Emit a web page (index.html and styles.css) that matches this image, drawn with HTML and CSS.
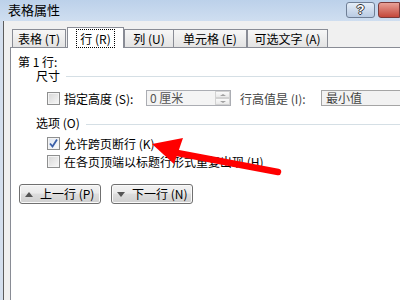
FILE: index.html
```html
<!DOCTYPE html>
<html lang="zh">
<head>
<meta charset="utf-8">
<link rel="stylesheet" href="styles.css">
</head>
<body>
<div class="window">
  <div class="titlebar">
    <span class="title">表格属性</span>
    <span class="tb-btns">
      <span class="help">?</span>
      <span class="close"></span>
    </span>
  </div>
  <div class="body">
    <div class="lframe"></div>
    <div class="dlg">
      <div class="tabs">
        <div class="tab t1">表格 (T)</div>
        <div class="tab sel"><span class="focus">行 (R)</span></div>
        <div class="tab t3">列 (U)</div>
        <div class="tab t4">单元格 (E)</div>
        <div class="tab t5">可选文字 (A)</div>
      </div>
      <div class="panel">
        <div class="rowtitle">第&nbsp;1&nbsp;行:</div>
        <div class="group g1"><span>尺寸</span><span class="rule"></span></div>
        <div class="sizerow">
          <span class="cb"></span>
          <span class="lbl1">指定高度 (S):</span>
          <span class="spin"><span class="spin-val">0&nbsp;厘米</span><span class="spin-btns"><span class="sb"><span class="mini up"></span></span><span class="sb"><span class="mini dn"></span></span></span></span>
          <span class="lbl2">行高值是 (I):</span>
          <span class="select">最小值</span>
        </div>
        <div class="group g2"><span>选项 (O)</span><span class="rule"></span></div>
        <div class="cbrow first">
          <span class="cb checked"><svg viewBox="0 0 11 11" width="11" height="11"><path d="M2 5.5 L4.5 8.5 L9 1.5" fill="none" stroke="#3a5fa8" stroke-width="1.8"/></svg></span>
          <span>允许跨页断行 (K)</span>
        </div>
        <div class="cbrow">
          <span class="cb"></span>
          <span>在各页顶端以标题行形式重复出现 (H)</span>
        </div>
        <div class="btnrow">
          <span class="btn"><span class="tri up"></span>上一行 (P)</span>
          <span class="btn"><span class="tri dn"></span>下一行 (N)</span>
        </div>
      </div>
    </div>
  </div>
</div>
<svg class="arrow" width="400" height="300" viewBox="0 0 400 300">
  <polygon points="152,144 183,138 174,164" fill="#ff0000"/>
  <line x1="172" y1="152" x2="278" y2="172" stroke="#ff0000" stroke-width="6.5" stroke-linecap="round"/>
</svg>
</body>
</html>
```
FILE: styles.css
```css
html, body {
  margin: 0;
  padding: 0;
}
body {
  width: 400px;
  height: 300px;
  overflow: hidden;
  position: relative;
  font-family: "Noto Sans CJK SC", "Liberation Sans", sans-serif;
  font-size: 12px;
  color: #000;
  background: #fff;
}
.window {
  width: 400px;
  height: 300px;
  display: flex;
  flex-direction: column;
}
.titlebar {
  height: 21px;
  flex: none;
  display: flex;
  align-items: flex-start;
  justify-content: space-between;
  background: linear-gradient(#bcd1ea, #cfdef0);
}
.title {
  font-size: 13px;
  line-height: 19px;
  padding-left: 8px;
  color: #000;
}
.tb-btns {
  display: flex;
  gap: 3px;
  margin-top: 2px;
}
.help {
  width: 27px;
  height: 14px;
  border: 1px solid #6f7f96;
  border-radius: 3px;
  background: linear-gradient(#e4edf8, #b9cbe3);
  color: #fff;
  font-family: "Liberation Sans", sans-serif;
  font-weight: bold;
  font-size: 13px;
  line-height: 14px;
  text-align: center;
  text-shadow: 1px 0 0 #333, -1px 0 0 #333, 0 1px 0 #333, 0 -1px 0 #333;
}
.close {
  width: 20px;
  height: 14px;
  border: 1px solid #7a3a3a;
  border-radius: 3px 0 0 3px;
  background: linear-gradient(#e8a197, #c4473a);
}
.body {
  flex: 1;
  display: flex;
}
.lframe {
  width: 3px;
  flex: none;
  background: #d4dfee;
  border-right: 1px solid #5c5c5c;
}
.dlg {
  flex: 1;
  background: #f0f0f0;
  padding-left: 6px;
  padding-top: 6px;
  display: flex;
  flex-direction: column;
}
.tabs {
  display: flex;
  align-items: flex-end;
  height: 20px;
  padding-left: 2px;
  position: relative;
  z-index: 1;
}
.tab {
  height: 17px;
  border: 1px solid #898c95;
  border-bottom: none;
  background: linear-gradient(#f7f7f7, #e3e3e3);
  text-align: center;
  line-height: 17px;
  box-sizing: content-box;
}
.t1 { width: 52px; }
.sel {
  width: 55px;
  height: 20px;
  background: #fff;
  margin-left: 1px;
  margin-bottom: -1px;
  line-height: 22px;
}
.focus {
  outline: 1px dotted #000;
  padding: 0 3px;
}
.t3 { width: 48px; }
.t4 { width: 72px; border-left: none; }
.t5 { width: 79px; border-left: 1px solid #898c95; }
.panel {
  flex: 1;
  background: #fff;
  border-left: 1px solid #898c95;
  border-top: 1px solid #898c95;
  padding-left: 7px;
  padding-top: 7px;
  display: flex;
  flex-direction: column;
}
.rowtitle {
  line-height: 13px;
}
.group {
  display: flex;
  align-items: center;
  margin-left: 18px;
  line-height: 13px;
  margin-top: 1px;
}
.group .rule {
  flex: 1;
  border-top: 1px solid #d5dfe5;
  margin-left: 6px;
  margin-top: 2px;
}
.g2 { margin-top: 10px; line-height: 14px; }
.sizerow {
  display: flex;
  align-items: center;
  margin-left: 29px;
  margin-top: 8px;
  height: 16px;
}
.cb {
  width: 11px;
  height: 11px;
  border: 1px solid #8e8f8f;
  background: linear-gradient(135deg, #d6d6d6, #f8f8f8);
  box-shadow: inset 0 0 0 1px #f4f4f4;
  flex: none;
  display: flex;
}
.cb.checked {
  background: linear-gradient(135deg, #dfe6f1, #fbfcfd);
}
.lbl1 {
  width: 82px;
  margin-left: 4px;
  white-space: nowrap;
}
.spin {
  width: 83px;
  height: 14px;
  border: 1px solid #abadb3;
  background: #f4f4f4;
  display: flex;
  justify-content: space-between;
  color: #555;
}
.spin-val {
  padding-left: 3px;
  line-height: 14px;
}
.spin-btns {
  width: 15px;
  display: flex;
  flex-direction: column;
}
.sb {
  flex: 1;
  background: linear-gradient(#fafafa, #e9e9e9);
  border: 1px solid #d2d2d2;
  display: flex;
  align-items: center;
  justify-content: center;
}
.mini {
  width: 0;
  height: 0;
  border-left: 3px solid transparent;
  border-right: 3px solid transparent;
}
.mini.up { border-bottom: 2px solid #a0a0a0; }
.mini.dn { border-top: 2px solid #a0a0a0; }
.lbl2 {
  width: 81px;
  margin-left: 9px;
  color: #444;
  white-space: nowrap;
}
.select {
  width: 90px;
  flex: none;
  height: 14px;
  border: 1px solid #a5a5a5;
  background: #f2f2f2;
  padding-left: 4px;
  line-height: 14px;
  color: #444;
}
.cbrow {
  display: flex;
  align-items: center;
  margin-left: 29px;
  height: 18px;
  gap: 4px;
  white-space: nowrap;
}
.cbrow.first { margin-top: 4px; }
.btnrow {
  display: flex;
  gap: 10px;
  margin-top: 14px;
  margin-left: 1px;
}
.btn {
  width: 80px;
  height: 18px;
  border: 1px solid #707070;
  border-radius: 3px;
  background: linear-gradient(#f2f2f2 0%, #ebebeb 45%, #dddddd 50%, #cfcfcf 100%);
  display: flex;
  align-items: center;
  line-height: 18px;
  box-shadow: inset 0 0 0 1px #fafafa;
}
.tri {
  width: 0;
  height: 0;
  border-left: 4px solid transparent;
  border-right: 4px solid transparent;
  margin-left: 5px;
  margin-right: 7px;
}
.tri.up { border-bottom: 5px solid #555; }
.tri.dn { border-top: 5px solid #555; }
.arrow {
  position: absolute;
  left: 0;
  top: 0;
  pointer-events: none;
}
```
